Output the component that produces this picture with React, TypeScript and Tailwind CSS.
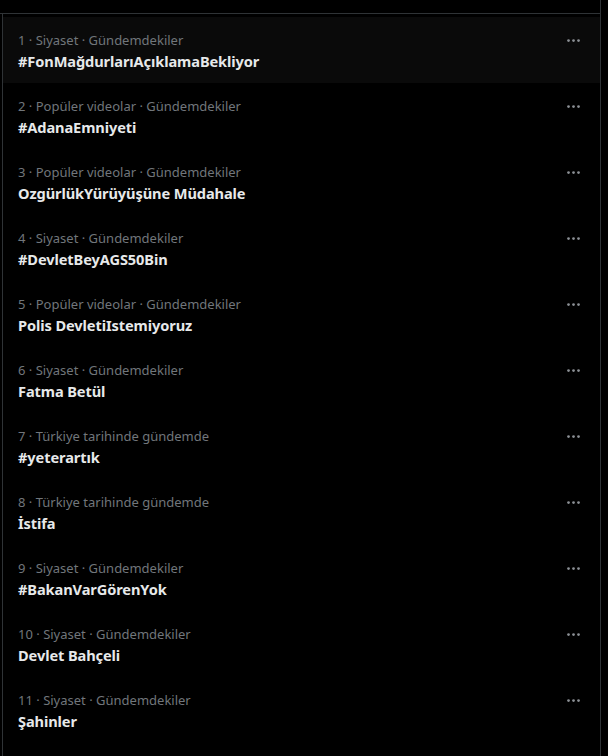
const trends = [
  { n: 1, cat: "Siyaset · Gündemdekiler", title: "#FonMağdurlarıAçıklamaBekliyor" },
  { n: 2, cat: "Popüler videolar · Gündemdekiler", title: "#AdanaEmniyeti" },
  { n: 3, cat: "Popüler videolar · Gündemdekiler", title: "OzgürlükYürüyüşüne Müdahale" },
  { n: 4, cat: "Siyaset · Gündemdekiler", title: "#DevletBeyAGS50Bin" },
  { n: 5, cat: "Popüler videolar · Gündemdekiler", title: "Polis DevletiIstemiyoruz" },
  { n: 6, cat: "Siyaset · Gündemdekiler", title: "Fatma Betül" },
  { n: 7, cat: "Türkiye tarihinde gündemde", title: "#yeterartık" },
  { n: 8, cat: "Türkiye tarihinde gündemde", title: "İstifa" },
  { n: 9, cat: "Siyaset · Gündemdekiler", title: "#BakanVarGörenYok" },
  { n: 10, cat: "Siyaset · Gündemdekiler", title: "Devlet Bahçeli" },
  { n: 11, cat: "Siyaset · Gündemdekiler", title: "Şahinler" },
];

function MoreIcon() {
  return (
    <svg viewBox="0 0 24 24" className="h-[15px] w-[15px] fill-[#8b8f94]">
      <circle cx="4" cy="12" r="2.2" />
      <circle cx="12" cy="12" r="2.2" />
      <circle cx="20" cy="12" r="2.2" />
    </svg>
  );
}

function TrendRow({ n, cat, title, active }: { n: number; cat: string; title: string; active?: boolean }) {
  return (
    <div className={`flex justify-between pl-[15px] pr-[19px] pt-[15px] pb-[12px] ${active ? "bg-[#0a0a0a]" : ""}`}>
      <div className="flex flex-col">
        <div className="text-[13px] leading-4 text-[#71767b]">
          {n} · {cat}
        </div>
        <div className="mt-[3px] text-[14.6px] font-bold leading-5 tracking-[-0.1px] text-[#e7e9ea]">{title}</div>
      </div>
      <div className="pt-px">
        <MoreIcon />
      </div>
    </div>
  );
}

export default function App() {
  return (
    <div
      className="flex h-[756px] w-[608px] overflow-hidden bg-black"
      style={{ fontFamily: '"Noto Sans", "Segoe UI", sans-serif' }}
    >
      <div className="flex w-[601px] flex-col border-r border-[#2f3336]">
        <div className="h-[13px] shrink-0" />
        <div className="flex-1 border-t border-[#2f3336]">
          <div className="ml-[2px] h-full border-l border-[#2f3336] pt-[3px]">
            {trends.map((t) => (
              <TrendRow key={t.n} {...t} active={t.n === 1} />
            ))}
          </div>
        </div>
      </div>
    </div>
  );
}
